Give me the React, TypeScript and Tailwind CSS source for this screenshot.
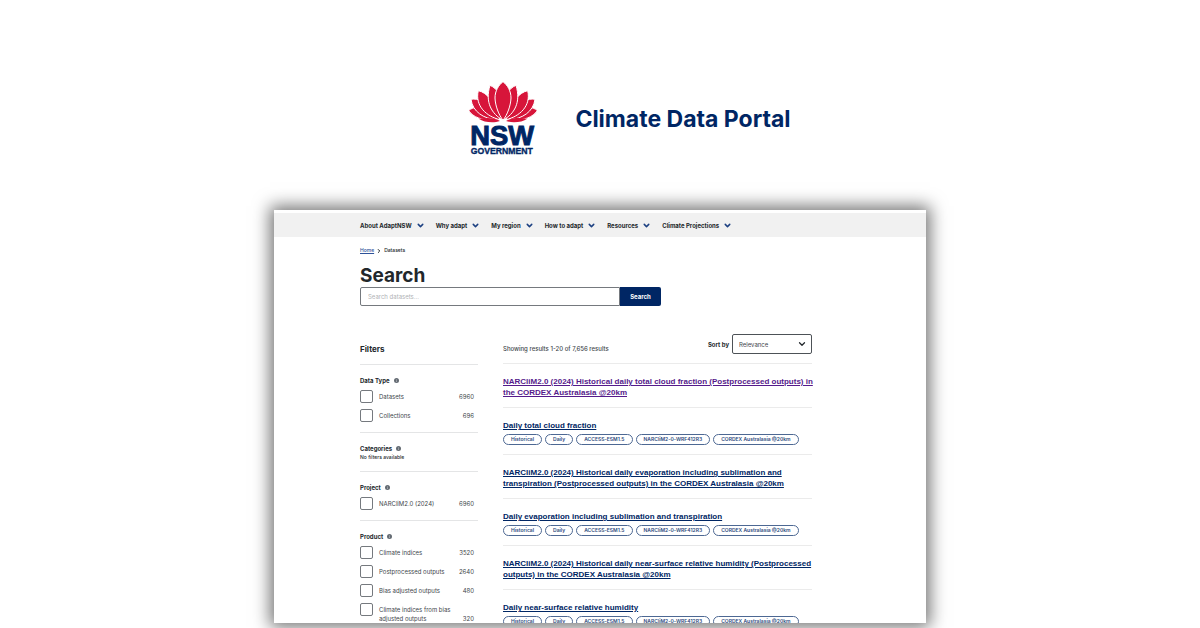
import { FC } from "react";
import { ChevronDown, ChevronRight } from "lucide-react";

const navItems = [
  "About AdaptNSW",
  "Why adapt",
  "My region",
  "How to adapt",
  "Resources",
  "Climate Projections",
];

const tags = [
  "Historical",
  "Daily",
  "ACCESS-ESM1.5",
  "NARCliM2-0-WRF412R3",
  "CORDEX Australasia @20km",
];

interface FilterGroup {
  name: string;
  options: { label: string; count: number }[];
}

const filterGroups: FilterGroup[] = [
  {
    name: "Data Type",
    options: [
      { label: "Datasets", count: 6960 },
      { label: "Collections", count: 696 },
    ],
  },
  { name: "Categories", options: [] },
  { name: "Project", options: [{ label: "NARCliM2.0 (2024)", count: 6960 }] },
  {
    name: "Product",
    options: [
      { label: "Climate indices", count: 3520 },
      { label: "Postprocessed outputs", count: 2640 },
      { label: "Bias adjusted outputs", count: 480 },
      { label: "Climate indices from bias adjusted outputs", count: 320 },
    ],
  },
];

interface Result {
  title: string[];
  visited?: boolean;
  tagged?: boolean;
}

const results: Result[] = [
  {
    title: [
      "NARCliM2.0 (2024) Historical daily total cloud fraction (Postprocessed outputs) in",
      "the CORDEX Australasia @20km",
    ],
    visited: true,
  },
  { title: ["Daily total cloud fraction"], tagged: true },
  {
    title: [
      "NARCliM2.0 (2024) Historical daily evaporation including sublimation and",
      "transpiration (Postprocessed outputs) in the CORDEX Australasia @20km",
    ],
  },
  { title: ["Daily evaporation including sublimation and transpiration"], tagged: true },
  {
    title: [
      "NARCliM2.0 (2024) Historical daily near-surface relative humidity (Postprocessed",
      "outputs) in the CORDEX Australasia @20km",
    ],
  },
  { title: ["Daily near-surface relative humidity"], tagged: true },
];

const Logo: FC = () => (
  <svg
    viewBox="31 36 204 219"
    className="h-[73px] w-[68px]"
    role="img"
    aria-label="NSW Government"
  >
    <g fill="#d7153a" stroke="#fff" strokeWidth="3" strokeLinejoin="round">
      <path d="M30 122C36 116 44 113 54 112C74 118 90 134 98 149C70 151 44 142 30 122Z" />
      <path d="M236 122C230 116 222 113 212 112C192 118 176 134 168 149C196 151 222 142 236 122Z" />
      <path d="M37 88C48 86 60 88 70 93C90 104 104 126 112 149C76 146 42 126 37 88Z" />
      <path d="M229 88C218 86 206 88 196 93C176 104 162 126 154 149C190 146 224 126 229 88Z" />
      <path d="M59 62C72 65 84 73 92 84C108 104 118 128 124 149C84 140 48 108 59 62Z" />
      <path d="M207 62C194 65 182 73 174 84C158 104 148 128 142 149C182 140 218 108 207 62Z" />
      <path d="M94 46C106 51 115 60 121 70C130 96 134 124 132 150C100 132 78 98 94 46Z" />
      <path d="M172 46C160 51 151 60 145 70C136 96 132 124 134 150C166 132 188 98 172 46Z" />
      <path d="M133 35C147 46 157 63 157 84C156 108 146 134 133 151C120 134 110 108 109 84C109 63 119 46 133 35Z" />
    </g>
    <path
      d="M60 146C84 143 108 143 124 153C104 160 76 157 60 146ZM206 146C182 143 158 143 142 153C162 160 190 157 206 146Z"
      fill="#d7153a"
    />
    <g fill="#002664" stroke="#002664" className="font-['Liberation_Sans',sans-serif] font-bold">
      <text x="35" y="224" fontSize="82" strokeWidth="3">
        NSW
      </text>
      <text x="36" y="253" fontSize="26" strokeWidth="1">
        GOVERNMENT
      </text>
    </g>
  </svg>
);

const InfoDot: FC = () => (
  <svg viewBox="0 0 10 10" className="size-[5px]" aria-hidden="true">
    <circle cx="5" cy="5" r="5" fill="#646b73" />
    <path d="M5 4.5V8M5 2V3.3" stroke="#c9ccd0" strokeWidth="1.2" />
  </svg>
);

const Filters: FC = () => (
  <aside className="w-[118px] shrink-0 pt-[9px]">
    <h2 className="pb-[9px] text-[8px] leading-[12px] font-bold">Filters</h2>
    {filterGroups.map((group) => (
      <section key={group.name} className="border-t border-[#e4e5e6] pt-[11px] pb-[10px]">
        <h3 className="flex items-center gap-1 text-[6px] leading-[9px] font-bold">
          {group.name}
          <InfoDot />
        </h3>
        {group.options.length === 0 ? (
          <p className="text-[5px] leading-[8px] font-medium">No filters available</p>
        ) : (
          <ul className="mt-[5px] flex flex-col gap-[6px]">
            {group.options.map(({ label, count }) => (
              <li key={label}>
                <label className="flex items-start gap-[6px] text-[6px] leading-[9px] text-[#41464b]">
                  <input
                    type="checkbox"
                    className="size-[13px] shrink-0 appearance-none rounded-[2px] border border-[#75797e] bg-white"
                  />
                  <span className="flex flex-1 items-end justify-between pt-[2px] pr-1">
                    <span className="max-w-[78px]">{label}</span>
                    <span>{count}</span>
                  </span>
                </label>
              </li>
            ))}
          </ul>
        )}
      </section>
    ))}
  </aside>
);

const Results: FC = () => (
  <section className="min-w-0 flex-1">
    <div className="flex items-start justify-between pb-[9px]">
      <p className="pt-[10px] text-[6px] leading-[10px] font-medium text-[#41464b]">
        Showing results 1-20 of 7,656 results
      </p>
      <div className="flex items-center gap-[3px]">
        <label htmlFor="sort" className="text-[6px] font-bold">
          Sort by
        </label>
        <div className="grid items-center">
          <select
            id="sort"
            className="col-start-1 row-start-1 h-5 w-20 appearance-none rounded-[2px] border border-[#4d5257] bg-white px-[6px] text-[6px] text-[#41464b]"
          >
            <option>Relevance</option>
          </select>
          <ChevronDown
            className="pointer-events-none col-start-1 row-start-1 mr-[5px] size-[10px] justify-self-end"
            strokeWidth={3}
          />
        </div>
      </div>
    </div>
    {results.map(({ title, visited, tagged }) => (
      <article key={title[0]} className="border-t border-[#ebebeb] pt-3 pb-[9px]">
        <h3 className="font-['Liberation_Sans',sans-serif] text-[8px] leading-[11px] font-bold whitespace-nowrap">
          <a href="#" className={visited ? "text-[#551a8b]" : "text-[#002664]"}>
            {title.map((line) => (
              <span key={line} className="block underline">
                {line}
              </span>
            ))}
          </a>
        </h3>
        {tagged && (
          <ul className="mt-[3px] flex gap-[3px]">
            {tags.map((tag) => (
              <li
                key={tag}
                className="flex h-[11px] items-center rounded-full border border-[#4d6893] px-[7px] text-[5px] font-semibold whitespace-nowrap text-[#2e4a7d]"
              >
                {tag}
              </li>
            ))}
          </ul>
        )}
      </article>
    ))}
  </section>
);

const PortalWindow: FC = () => (
  <div className="min-h-0 w-full max-w-[652px] flex-1 overflow-hidden bg-white pt-[3px] text-[#22272b] shadow-[0_0_16px_4px_rgba(0,0,0,0.55)]">
    <nav className="flex h-6 items-center gap-[11px] bg-[#f1f1f1] px-[86px]">
      {navItems.map((item) => (
        <a
          key={item}
          href="#"
          className="flex items-center gap-1 text-[6px] font-bold whitespace-nowrap"
        >
          {item}
          <ChevronDown className="size-[9px] text-[#1d4182]" strokeWidth={4} />
        </a>
      ))}
    </nav>
    <main className="px-[86px] pt-[9px]">
      <div className="flex items-center gap-[2px] text-[5px] leading-[9px] font-medium">
        <a href="#" className="text-[#2e5299] underline">
          Home
        </a>
        <ChevronRight className="size-[6px]" strokeWidth={4} />
        <span>Datasets</span>
      </div>
      <h1 className="mt-[10px] text-[19px] leading-[22px] font-bold">Search</h1>
      <form className="flex h-[19px] w-[301px]">
        <input
          type="text"
          aria-label="Search datasets"
          placeholder="Search datasets..."
          className="min-w-0 flex-1 rounded-l-[2px] border border-[#75797e] px-[7px] text-[6px] placeholder:text-[#b0b2b5]"
        />
        <button
          type="button"
          className="w-[41px] rounded-r-[2px] bg-[#002664] text-[6px] font-bold text-white"
        >
          Search
        </button>
      </form>
      <div className="mt-7 flex max-w-[452px] gap-[25px]">
        <Filters />
        <Results />
      </div>
    </main>
  </div>
);

export default function App() {
  return (
    <div className="flex h-screen flex-col items-center overflow-hidden bg-white pb-[5px] font-['Inter',sans-serif]">
      <header className="flex shrink-0 items-center gap-[38px] pt-[82px] pb-[55px] pl-[60px]">
        <Logo />
        <p className="text-[23px] leading-8 font-bold text-[#002664]">
          Climate Data Portal
        </p>
      </header>
      <PortalWindow />
    </div>
  );
}
